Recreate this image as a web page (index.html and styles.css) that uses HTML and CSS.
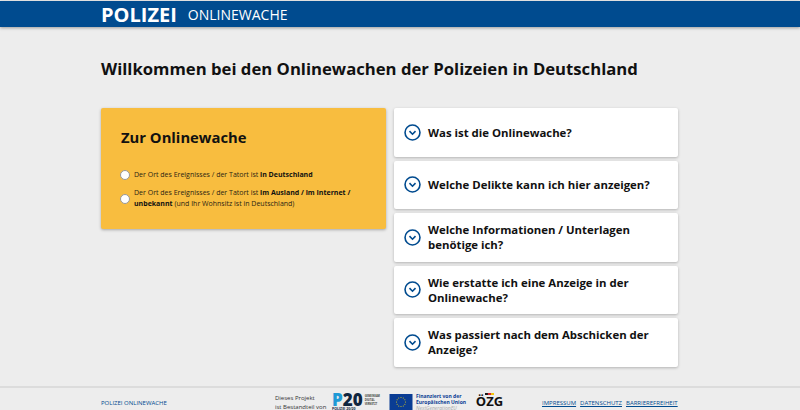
FILE: index.html
```html
<!DOCTYPE html>
<html lang="de">
<head>
  <meta charset="UTF-8">
  <title>Polizei Onlinewache</title>
  <link rel="stylesheet" href="styles.css">
</head>
<body>

<header class="topbar">
  <div class="topbar-inner">
    <span class="brand">POLIZEI</span>
    <span class="brand-sub">ONLINEWACHE</span>
  </div>
</header>

<main class="content">
  <h1>Willkommen bei den Onlinewachen der Polizeien in Deutschland</h1>

  <div class="columns">
    <!-- Auswahl -->
    <section class="choice">
      <h2>Zur Onlinewache</h2>
      <label class="radio-row">
        <span class="radio"></span>
        <span>Der Ort des Ereignisses / der Tatort ist <b>in Deutschland</b></span>
      </label>
      <label class="radio-row">
        <span class="radio"></span>
        <span>Der Ort des Ereignisses / der Tatort ist <b>im Ausland / im Internet / unbekannt</b> (und Ihr Wohnsitz ist in Deutschland)</span>
      </label>
    </section>

    <!-- Fragen -->
    <section class="faq">
      <div class="faq-item">
        <svg class="chevron" viewBox="0 0 18 18"><circle cx="9" cy="9" r="7.9"/><path d="M5.8 7.6 9 10.8l3.2-3.2"/></svg>
        <span>Was ist die Onlinewache?</span>
      </div>
      <div class="faq-item">
        <svg class="chevron" viewBox="0 0 18 18"><circle cx="9" cy="9" r="7.9"/><path d="M5.8 7.6 9 10.8l3.2-3.2"/></svg>
        <span>Welche Delikte kann ich hier anzeigen?</span>
      </div>
      <div class="faq-item">
        <svg class="chevron" viewBox="0 0 18 18"><circle cx="9" cy="9" r="7.9"/><path d="M5.8 7.6 9 10.8l3.2-3.2"/></svg>
        <span>Welche Informationen / Unterlagen benötige ich?</span>
      </div>
      <div class="faq-item">
        <svg class="chevron" viewBox="0 0 18 18"><circle cx="9" cy="9" r="7.9"/><path d="M5.8 7.6 9 10.8l3.2-3.2"/></svg>
        <span>Wie erstatte ich eine Anzeige in der Onlinewache?</span>
      </div>
      <div class="faq-item">
        <svg class="chevron" viewBox="0 0 18 18"><circle cx="9" cy="9" r="7.9"/><path d="M5.8 7.6 9 10.8l3.2-3.2"/></svg>
        <span>Was passiert nach dem Abschicken der Anzeige?</span>
      </div>
    </section>
  </div>
</main>

<footer class="footer">
  <a class="footer-home" href="#">POLIZEI ONLINEWACHE</a>

  <div class="logos">
    <span class="project">Dieses Projekt<br>ist Bestandteil von</span>
    <div class="p20">
      <div class="p20-top">
        <span class="p20-mark"><span class="p20-p">P</span>20</span>
        <span class="p20-small">GEMEINSAM<br>DIGITAL<br>VERNETZT</span>
      </div>
      <span class="p20-under">POLIZEI 20/20</span>
    </div>
    <div class="eu">
      <svg class="eu-flag" viewBox="0 0 46 32">
        <rect width="46" height="32" fill="#0a3d94"/>
        <g fill="#f5d90a">
          <circle cx="23" cy="7" r="1"/><circle cx="27.5" cy="8.2" r="1"/><circle cx="30.8" cy="11.5" r="1"/>
          <circle cx="32" cy="16" r="1"/><circle cx="30.8" cy="20.5" r="1"/><circle cx="27.5" cy="23.8" r="1"/>
          <circle cx="23" cy="25" r="1"/><circle cx="18.5" cy="23.8" r="1"/><circle cx="15.2" cy="20.5" r="1"/>
          <circle cx="14" cy="16" r="1"/><circle cx="15.2" cy="11.5" r="1"/><circle cx="18.5" cy="8.2" r="1"/>
        </g>
      </svg>
      <span class="eu-text"><b>Finanziert von der<br>Europäischen Union</b><br><i>NextGenerationEU</i></span>
    </div>
    <div class="ozg">
      <svg class="ozg-flag" viewBox="0 0 14 3"><rect width="4.6" height="3" fill="#111"/><rect x="4.6" width="4.8" height="3" fill="#d8232a"/><rect x="9.4" width="4.6" height="3" fill="#f3c400"/></svg>
      <span class="ozg-text">ÖZG</span>
    </div>
  </div>

  <nav class="footer-links">
    <a href="#">IMPRESSUM</a>
    <a href="#">DATENSCHUTZ</a>
    <a href="#">BARRIEREFREIHEIT</a>
  </nav>
</footer>

</body>
</html>
```

FILE: styles.css
```css
* {
  box-sizing: border-box;
}

html, body {
  height: 410px;
  overflow: hidden;
}

body {
  margin: 0;
  padding-top: 1px;
  background-color: #ededed;
  color: #111;
  font-family: "Open Sans", Arial, sans-serif;
}

.topbar {
  height: 26px;
  background-color: #004b8f;
  box-shadow: 0 1px 3px rgba(0, 0, 0, 0.35);
  color: #fff;
}

.topbar-inner {
  display: flex;
  align-items: center;
  gap: 11px;
  height: 100%;
  padding-left: 101px;
}

.brand {
  font-size: 20px;
  font-weight: 700;
}

.brand-sub {
  font-size: 14px;
}

.content {
  width: 577px;
  margin-left: 101px;
}

h1 {
  margin: 29px 0 27px;
  font-size: 16.7px;
  line-height: 25px;
  font-weight: 700;
  white-space: nowrap;
}

.columns {
  display: flex;
  align-items: flex-start;
  gap: 8px;
}

.choice {
  width: 285px;
  height: 121px;
  padding: 19px 20px 0;
  background-color: #f8bd3f;
  border-radius: 2px;
  box-shadow: 0 1px 3px rgba(0, 0, 0, 0.3);
}

.choice h2 {
  margin: 0 0 23px;
  font-size: 14.8px;
  line-height: 20px;
  font-weight: 700;
}

.radio-row {
  display: flex;
  align-items: center;
  gap: 4px;
  margin-bottom: 7.5px;
  margin-left: -1px;
  font-size: 7px;
  line-height: 10.5px;
  color: #2b2413;
}

.radio-row b {
  color: #111;
}

.radio {
  flex: none;
  width: 10px;
  height: 10px;
  background-color: #fff;
  border: 1px solid #999;
  border-radius: 50%;
}

.faq {
  flex: 1;
  display: flex;
  flex-direction: column;
  gap: 4px;
}

.faq-item {
  display: flex;
  align-items: center;
  gap: 7px;
  height: 48.5px;
  padding: 0 20px 0 10px;
  background-color: #fff;
  border-radius: 2px;
  box-shadow: 0 1px 3px rgba(0, 0, 0, 0.25);
  font-size: 11.4px;
  line-height: 15px;
  font-weight: 700;
}

.chevron {
  flex: none;
  width: 17px;
  height: 17px;
  fill: none;
  stroke: #004b8f;
  stroke-width: 1.7;
}

.footer {
  position: absolute;
  left: 0;
  right: 0;
  top: 386px;
  display: flex;
  align-items: flex-start;
  height: 24px;
  padding-left: 101px;
  border-top: 2px solid #dcdcdc;
  font-size: 6px;
}

.footer a {
  color: #004b8f;
}

.footer-home {
  width: 174px;
  margin-top: 11px;
  text-decoration: none;
}

.logos {
  display: flex;
  align-items: flex-start;
  padding-top: 5px;
}

.project {
  width: 57px;
  margin-top: 1px;
  line-height: 9px;
  color: #333;
}

.p20 {
  width: 57px;
}

.p20-top {
  display: flex;
  align-items: center;
  gap: 2px;
}

.p20-mark {
  font-size: 17px;
  line-height: 14px;
  font-weight: 800;
  color: #10263f;
}

.p20-p {
  color: #1e9ad6;
}

.p20-small {
  font-size: 2.5px;
  line-height: 4px;
  font-weight: 700;
  color: #444;
}

.p20-under {
  display: block;
  font-size: 3.5px;
  line-height: 3px;
  font-weight: 700;
  color: #10263f;
}

.eu {
  display: flex;
  gap: 3px;
  width: 87px;
}

.eu-flag {
  width: 24px;
  height: 16px;
  margin-top: 1px;
}

.eu-text {
  font-size: 5px;
  line-height: 6px;
  white-space: nowrap;
  color: #0a3d94;
}

.eu-text i {
  color: #aaa;
}

.ozg {
  display: flex;
  flex-direction: column;
  align-items: center;
  width: 27px;
}

.ozg-flag {
  width: 9px;
  height: 2px;
}

.ozg-text {
  font-size: 13px;
  line-height: 13px;
  font-weight: 700;
}

.footer-links {
  display: flex;
  gap: 4px;
  margin-top: 11px;
  margin-left: 39px;
}
```
